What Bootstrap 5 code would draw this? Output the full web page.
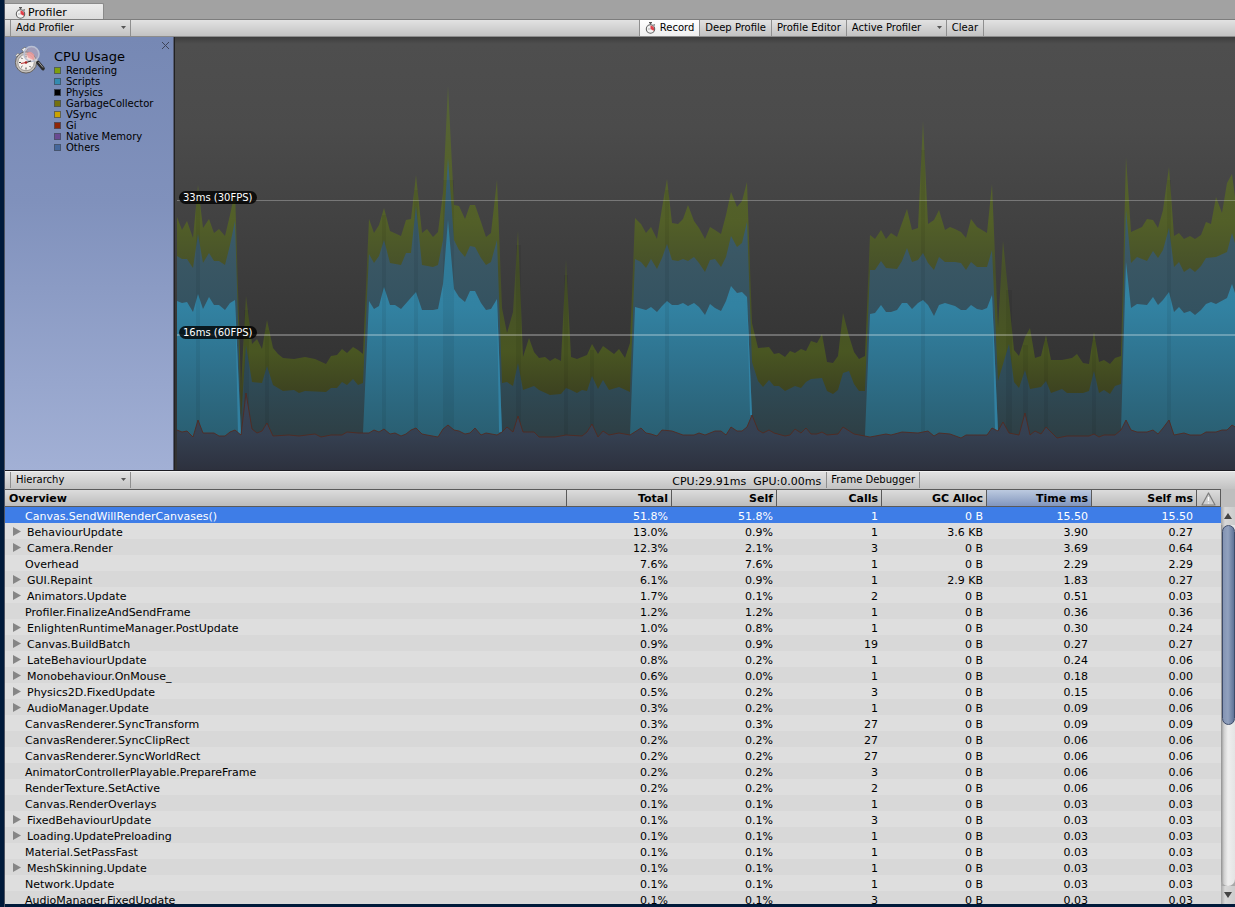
<!DOCTYPE html>
<html lang="en">
<head>
<meta charset="utf-8">
<meta name="viewport" content="width=device-width, initial-scale=1">
<title>Profiler</title>
<link href="https://cdn.jsdelivr.net/npm/bootstrap@5.3.0/dist/css/bootstrap.min.css" rel="stylesheet">
<style>
  body { background: #001a3a; font-family: "DejaVu Sans", sans-serif; font-size: 11px; line-height: 16px; color: #000; }
  .window { margin-left: 4px; border-left: 1px solid #4d5260; padding-bottom: 3px; background-clip: content-box; }
  /* window tab */
  .tabstrip { height: 19px; background: #a2a2a2; padding-top: 3px; flex: none; }
  .tab-btn { width: 99px; height: 16px; padding: 2px 0 0 10px; border: 1px solid #8a8a8a; border-width: 1px 1px 0 0; border-radius: 0 2px 0 0; background: linear-gradient(#ececec, #dcdcdc); font-size: 11px; line-height: 14px; text-align: left; }
  .watch { width: 11px; height: 12px; flex: none; }
  .tab-btn .watch { margin-right: 2px; }
  .tool .watch { margin-right: 4px; }
  /* toolbars */
  .toolbar { height: 18px; flex: none; font-size: 11px; line-height: 15px; border-top: 1px solid #7d7d7d; border-bottom: 1px solid #8c8c8c; background: linear-gradient(#e2e2e2, #c2c2c2); }
  .toolbar.lower { border-top-color: #f0f0f0; border-bottom: 0; }
  .tool { border: 0; border-right: 1px solid #8f8f8f; background: transparent; padding: 0 5px; height: 16px; font-size: 10px; line-height: 16px; color: #000; border-radius: 0; white-space: nowrap; }
  .tool.first { border-left: 1px solid #8f8f8f; }
  .tool.snug { padding: 0 4px; }
  .tool.on { background: linear-gradient(#fff, #efefef); }
  select.tool { appearance: none; padding-left: 5px; background: url("data:image/svg+xml,%3Csvg xmlns='http://www.w3.org/2000/svg' width='5' height='3'%3E%3Cpath d='M0 0h5L2.5 3z' fill='%23555'/%3E%3C/svg%3E") no-repeat right 4px top 6px; }
  .pick-view { width: 121px; margin-left: 5px; }
  .pick-target { width: 100px; }
  .end-space { margin-right: 251px; }
  .end-space-lower { margin-right: 315px; }
  .stats { line-height: 19px; padding-right: 5px; gap: 7px; }
  /* chart area */
  .monitor { height: 434px; flex: none; background: #333; border-bottom: 1px solid #1c1c22; }
  .legend-pane { width: 169px; flex: none; padding: 8px 3px 0 9px; background: linear-gradient(#7688b4, #8091bc 38%, #a2b0d5); border-right: 1px solid #555c74; }
  .legend-title { font-size: 13px; line-height: 16px; margin: 4px 0 0; font-weight: 400; }
  .legend-list { font-size: 10px; line-height: 11px; }
  .legend-list li { gap: 5px; }
  .swatch { width: 7px; height: 7px; border: 1px solid rgba(70,80,100,.8); flex: none; }
  .shut { border: 0; background: none; padding: 0; position: absolute; right: 3px; top: 4px; line-height: 0; }
  .plot { min-width: 0; padding-left: 2px; background: linear-gradient(#3d3d3d, #4e4e4e 7px, #4b4b4b 90px, #333 330px); border-left: 1px solid #222; }
  .plot svg { width: 100%; height: 100%; display: block; }
  .fps { position: absolute; left: 4px; height: 13px; padding: 0 4px; border-radius: 7px; background: rgba(0,0,0,.8); color: #fff; font-size: 10px; line-height: 13px; white-space: nowrap; }
  .fps-30 { top: 154px; }
  .fps-60 { top: 289px; }
  /* call table */
  .grid-area { min-height: 0; background: #bebebe; }
  .calls { table-layout: fixed; width: 100%; border-collapse: separate; border-spacing: 0; }
  .calls th { height: 18px; padding: 1px 3px 0; line-height: 15px; border: 1px solid #5a5a5a; border-left: 0; background: linear-gradient(#dcdcdc, #bcbcbc); text-align: right; font-weight: 700; white-space: nowrap; }
  .calls th:first-child { text-align: left; padding-left: 4px; }
  .calls th.sorted { background: linear-gradient(#bccae0, #8296bd); }
  .calls td { height: 16px; padding: 3px 4px 0 0; line-height: 13px; text-align: right; white-space: nowrap; }
  .calls td:first-child { text-align: left; padding-left: 20px; }
  .calls tr.parent td:first-child { padding-left: 8px; }
  .calls tbody tr { background: #d8d8d8; }
  .calls tbody tr:nth-child(even) { background: #dedede; }
  .calls tbody tr.picked { background: #3e7de7; color: #fff; }
  .twist { width: 8px; height: 9px; margin-right: 6px; display: inline-block; background: #858585; clip-path: polygon(0 0, 100% 50%, 0 100%); }
  .c-num { width: 105px; }
  .c-warn { width: 24px; }
  .bar-col { width: 14px; flex: none; padding-top: 18px; }
  .rail { background: #a8a8a8; min-height: 0; }
  .rail-groove { height: 100%; border-radius: 0 0 7px 7px; background: linear-gradient(90deg, #8f8f8f, #cfcfcf 3px, #eee 7px, #e4e4e4); }
  .step { height: 18px; border: 0; padding: 0; background: linear-gradient(90deg, #a8a8a8, #d8d8d8 4px, #ccc); line-height: 0; flex: none; }
  .thumb { height: 200px; margin-left: 1px; border: 1px solid #3d4b69; border-radius: 7px; background: linear-gradient(90deg, #8494b3, #91a1be 5px, #5f7397); }
</style>
</head>
<body>
<svg width="0" height="0" class="d-none" aria-hidden="true">
  <symbol id="watch" viewBox="0 0 11 12">
    <path d="M4 .6h3M5.500 .5v2M8.700 2.300l1 1" stroke="#555" stroke-width="1.200" fill="none"/>
    <circle cx="5.500" cy="7" r="4.200" fill="#f4f4f4" stroke="#5f5f5f" stroke-width="1.100"/>
    <path d="M5.500 7V3.400A3.600 3.600 0 0 1 8.600 8.800z" fill="#e0404a"/>
    <path d="M5.500 7H3" stroke="#aaa" stroke-width=".8"/>
  </symbol>
</svg>
<div class="window d-flex flex-column vh-100 overflow-hidden">
  <div class="tabstrip">
    <button class="tab-btn d-flex align-items-center"><svg class="watch"><use href="#watch"/></svg>Profiler</button>
  </div>

  <div class="toolbar d-flex">
    <select class="tool first pick-view" aria-label="Add Profiler"><option>Add Profiler</option></select>
    <div class="d-flex ms-auto end-space">
      <button class="tool first on d-flex align-items-center"><svg class="watch"><use href="#watch"/></svg>Record</button>
      <button class="tool">Deep Profile</button>
      <button class="tool">Profile Editor</button>
      <select class="tool pick-target" aria-label="Target"><option>Active Profiler</option></select>
      <button class="tool">Clear</button>
    </div>
  </div>

  <div class="monitor d-flex">
    <div class="legend-pane d-flex position-relative">
      <svg width="32" height="32" viewBox="0 0 32 32" class="flex-shrink-0 me-2">
        <path d="M7.500 4.500l3.500-2.500 2.500 3-3.500 2.500z" fill="#eee" stroke="#6b6b6b" stroke-width=".8"/>
        <path d="M1.500 10.500l2.500-2.500 1.500 1.500-2.500 2.500z" fill="#ddd" stroke="#777" stroke-width=".6"/>
        <circle cx="12" cy="17.500" r="10.600" fill="#c4c0bc" stroke="#66625e"/>
        <circle cx="12" cy="17.500" r="8.200" fill="#f6f2ee" stroke="#8d8985" stroke-width=".8"/>
        <g stroke="#444"><path d="M12 10.500v2M12 22.500v2M5 17.500h2M7.100 12.600l1.400 1.400M7.100 22.400l1.400-1.400M16.900 22.400l-1.400-1.400"/></g>
        <circle cx="17.500" cy="9" r="7.500" fill="#efc4c2" fill-opacity=".35" stroke="#b9c0d3" stroke-width="1.600"/>
        <path d="M12.500 8.500q4-4 7.500 1 1 4-1 5.500l-5-2.500z" fill="#ef9a9a" fill-opacity=".8"/>
        <path d="M12 17.500l-5 1" stroke="#b33" stroke-width="1.200"/><path d="M12 17.500l5-1.500" stroke="#333" stroke-width="1.200"/>
        <circle cx="12" cy="17.500" r="1.300" fill="#a22"/>
        <path d="M21.500 14.500l3 3" stroke="#d4d4d4" stroke-width="2.200"/>
        <path d="M24 17.500l5 6" stroke="#2b2b2b" stroke-width="3.600" stroke-linecap="round"/>
        <path d="M24.500 17l4.500 5.500" stroke="#aaa" stroke-width=".9"/>
      </svg>
      <div>
        <h1 class="legend-title">CPU Usage</h1>
        <ul class="legend-list list-unstyled mb-0" id="legend"></ul>
      </div>
      <button class="shut" aria-label="Close"><svg width="9" height="9" viewBox="0 0 9 9"><path d="M1 1l7 7M8 1l-7 7" stroke="#3c4358" fill="none"/></svg></button>
    </div>
    <div class="plot flex-fill position-relative">
      <svg viewBox="177 37 1058 433" preserveAspectRatio="none" role="img" aria-label="Frame time by category">
        <defs>
          <linearGradient id="gGreen" gradientUnits="userSpaceOnUse" x1="0" y1="86" x2="0" y2="395"><stop offset="0" stop-color="#56643a"/><stop offset=".2" stop-color="#55622f"/><stop offset=".44" stop-color="#525f28"/><stop offset=".6" stop-color="#46502a"/><stop offset=".86" stop-color="#495622"/><stop offset="1" stop-color="#3c4120"/></linearGradient>
          <linearGradient id="gSlate" gradientUnits="userSpaceOnUse" x1="0" y1="160" x2="0" y2="435"><stop offset="0" stop-color="#38647a"/><stop offset=".35" stop-color="#3a5764"/><stop offset=".55" stop-color="#345260"/><stop offset=".8" stop-color="#2f4b57"/><stop offset="1" stop-color="#2e3f45"/></linearGradient>
          <linearGradient id="gBlue" gradientUnits="userSpaceOnUse" x1="0" y1="220" x2="0" y2="435"><stop offset="0" stop-color="#3585a5"/><stop offset=".4" stop-color="#3282a2"/><stop offset=".7" stop-color="#2e708b"/><stop offset="1" stop-color="#2a5f72"/></linearGradient>
          <linearGradient id="gBase" gradientUnits="userSpaceOnUse" x1="0" y1="400" x2="0" y2="470"><stop offset="0" stop-color="#3a4356"/><stop offset=".5" stop-color="#354051"/><stop offset="1" stop-color="#2d313e"/></linearGradient>
        </defs>
        <path fill="url(#gGreen)" d="M177 470L177 217 182 230 187 221 193 238 198 185 203 228 209 219 214 233 219 229 225 236 230 215 235 191 241 387 246 296 252 344 257 339 262 349 267 320 273 348 278 354 283 358 294 359 305 357 315 359 326 364 331 356 337 355 342 349 347 353 353 347 358 350 363 354 369 219 374 233 379 225 384 208 390 231 401 236 406 220 411 219 416 175 422 233 427 229 433 237 438 232 443 193 448 86 454 205 459 206 465 219 470 205 475 205 481 222 486 237 491 233 497 180 502 308 507 333 513 312 518 231 523 357 529 338 534 352 539 358 545 357 550 361 555 358 561 361 566 260 571 357 577 359 587 355 592 344 598 354 603 346 614 354 619 349 625 358 630 343 635 218 641 224 646 233 651 227 657 239 662 208 667 179 672 223 678 224 683 219 688 205 694 221 699 228 705 239 710 227 715 230 721 234 726 215 731 192 737 207 742 201 747 182 752 323 758 348 769 347 774 354 779 353 785 357 790 351 795 353 801 349 806 351 811 341 817 343 822 334 827 362 833 363 838 356 843 313 849 336 854 352 859 359 865 356 870 235 875 239 881 230 886 239 891 233 897 237 907 209 912 230 918 228 923 121 928 224 934 220 939 210 945 230 950 227 955 229 961 232 966 238 971 219 977 227 987 233 992 184 998 328 1003 241 1009 300 1014 350 1019 356 1025 337 1030 328 1035 358 1041 356 1046 335 1051 360 1062 360 1072 358 1077 354 1083 363 1089 364 1094 332 1099 362 1104 360 1110 364 1115 358 1121 356 1126 157 1131 232 1142 227 1147 219 1153 220 1158 228 1163 210 1169 167 1174 236 1179 233 1184 239 1190 236 1195 239 1201 235 1206 222 1211 224 1216 197 1222 213 1227 183 1232 174 1235 197V470z"/>
        <path fill="url(#gSlate)" d="M177 470L177 256 182 259 187 259 193 268 198 234 203 263 209 253 214 261 219 261 225 265 230 245 235 221 241 420 246 345 252 382 262 383 267 366 273 385 283 391 294 390 299 393 305 391 326 392 331 388 337 388 342 382 347 385 353 379 358 385 363 383 369 254 374 263 379 256 384 240 390 263 401 265 406 253 411 253 416 206 422 265 433 267 438 265 443 240 448 158 454 240 459 250 465 257 470 246 475 247 481 258 486 265 491 262 497 240 502 383 507 382 513 386 518 363 523 390 534 386 539 390 550 395 561 394 566 388 571 390 577 393 582 390 587 391 592 376 598 389 603 380 609 390 619 387 630 392 635 259 641 262 646 268 651 259 657 269 662 258 667 244 672 260 678 261 683 259 688 261 694 257 699 263 705 272 710 260 715 259 721 267 726 257 731 236 737 247 742 243 747 222 752 362 758 381 763 387 769 380 774 386 779 386 785 391 795 386 801 388 806 382 811 379 822 378 827 391 833 394 838 390 843 373 849 371 854 384 859 391 865 391 870 270 875 270 881 261 886 268 897 269 902 261 907 248 912 262 918 260 923 253 928 263 934 270 939 257 945 262 955 262 961 263 966 270 971 262 977 267 987 267 992 250 998 381 1009 344 1014 382 1019 388 1025 370 1030 389 1041 387 1046 381 1051 393 1062 389 1067 393 1083 393 1089 391 1094 371 1099 393 1104 390 1110 394 1115 386 1121 384 1126 210 1131 263 1137 257 1147 261 1153 251 1158 258 1163 250 1169 228 1174 267 1179 262 1184 272 1190 268 1195 272 1201 266 1206 258 1216 257 1227 252 1232 233 1235 243V470z"/>
        <path fill="url(#gBlue)" d="M177 470L177 301 182 303 187 302 193 312 198 294 203 309 209 297 214 305 219 305 225 310 230 303 235 300 241 435V470z
          M363 470V433L369 301 374 309 379 306 384 287 390 305 395 305 401 309 416 292 422 310 433 310 438 309 443 284 448 220 454 289 459 297 465 302 470 291 475 291 481 303 486 310 491 309 497 299 502 432V470z
          M630 470V435L635 307 646 310 651 307 657 312 662 306 667 301 672 305 678 305 683 303 688 306 694 303 699 307 705 315 710 304 715 308 721 311 726 301 731 286 737 293 742 292 747 297 752 415V470z
          M865 470V435L870 314 875 313 881 305 886 312 891 312 897 310 902 303 907 303 912 309 918 303 923 300 928 305 934 316 939 305 945 303 955 306 961 310 966 310 971 305 977 309 982 310 987 308 992 295 998 431V470z
          M1121 470V430L1126 262 1131 308 1137 304 1147 305 1153 297 1158 305 1163 300 1169 292 1174 312 1179 307 1184 313 1190 311 1195 315 1201 310 1206 304 1211 302 1216 304 1227 298 1232 284 1235 293V470z"/>
        <!-- brighter edge where script time falls off -->
        <path fill="#348bb0" fill-opacity=".7" d="M235 300L241 435H238zM497 299L502 432H499zM747 297L752 415H750zM992 295L998 431H995z"/>
        <!-- faint vertical shading under the peaks -->
        <path fill="#000" fill-opacity=".06" d="M196 200h4V470h-4zM244 310h5V470h-5zM265 330h4V470h-4zM382 215h4V470h-4zM414 190h4V470h-4zM443 180h11V470h-11zM516 245h5V470h-5zM564 275h4V470h-4zM590 350h4V470h-4zM665 190h4V470h-4zM921 150h4V470h-4zM1006 290h6V470h-6zM1023 345h5V470h-5zM1044 340h4V470h-4zM1092 340h4V470h-4zM1167 180h4V470h-4z"/>
        <path fill="url(#gBase)" stroke="#54291f" stroke-opacity=".85" d="M170 480V430L177 430 182 432 187 431 193 437 198 420 203 433 214 433 219 436 225 436 230 432 235 430 241 435 246 393 252 429 257 433 262 431 267 423 273 436 289 435 299 436 315 434 321 437 331 435 342 435 347 432 358 433 369 433 374 430 379 432 384 429 390 434 395 433 401 436 406 434 411 430 416 428 422 434 427 435 438 437 443 429 448 425 454 430 459 431 465 434 470 433 475 428 481 435 486 433 497 435 502 432 507 427 513 432 518 416 523 432 534 432 539 437 555 437 566 435 582 436 587 432 592 424 598 437 603 431 609 435 619 433 630 435 641 428 646 433 651 434 657 436 662 430 672 431 683 435 694 435 699 433 705 435 715 431 721 431 726 435 731 427 737 431 742 431 747 427 752 415 758 430 763 433 769 430 774 433 785 436 790 435 795 429 801 433 806 428 811 434 817 434 822 432 827 435 838 434 843 427 854 434 870 437 886 434 891 435 902 432 918 433 928 431 934 436 939 433 950 434 961 438 966 435 987 435 992 428 998 431 1003 422 1009 433 1019 435 1025 413 1030 435 1035 431 1041 434 1046 427 1057 438 1067 436 1089 436 1094 434 1099 437 1104 435 1115 435 1121 430 1126 420 1131 430 1137 432 1147 432 1153 430 1158 434 1163 428 1169 420 1174 435 1184 433 1190 435 1201 435 1206 432 1216 432 1222 430 1227 430 1232 425 1240 430V480z"/>
        <path fill="#fff" fill-opacity=".28" d="M177 200H1235V201H177zM177 334H1235V336H177z"/>
      </svg>
      <span class="fps fps-30">33ms (30FPS)</span>
      <span class="fps fps-60">16ms (60FPS)</span>
    </div>
  </div>

  <div class="toolbar lower d-flex">
    <select class="tool first pick-view" aria-label="View"><option>Hierarchy</option></select>
    <div class="d-flex ms-auto end-space-lower">
      <div class="stats d-flex"><span>CPU:29.91ms</span><span>GPU:0.00ms</span></div>
      <button class="tool first snug">Frame Debugger</button>
    </div>
  </div>

  <div class="grid-area flex-fill d-flex overflow-hidden">
    <div class="flex-fill overflow-hidden">
      <table class="calls">
        <colgroup><col><col class="c-num"><col class="c-num"><col class="c-num"><col class="c-num"><col class="c-num"><col class="c-num"><col class="c-warn"></colgroup>
        <thead><tr><th>Overview</th><th>Total</th><th>Self</th><th>Calls</th><th>GC Alloc</th><th class="sorted">Time ms</th><th>Self ms</th>
          <th aria-label="Warnings"><svg width="15" height="14" viewBox="0 0 15 14" class="d-block mx-auto"><path d="M7.500 1L14 13H1z" fill="#cfcfcf" stroke="#7c7c7c" stroke-width="1.200" stroke-linejoin="round"/><path d="M7.500 5v4M7.500 10.500v1" stroke="#fff" stroke-width="1.300"/></svg></th></tr></thead>
        <tbody id="rows"></tbody>
      </table>
    </div>
    <div class="bar-col d-flex flex-column">
      <button class="step" aria-label="Scroll up"><svg width="8" height="6" viewBox="0 0 8 6"><path d="M4 0l4 6H0z" fill="#444"/></svg></button>
      <div class="rail flex-fill"><div class="rail-groove"><div class="thumb"></div></div></div>
      <button class="step" aria-label="Scroll down"><svg width="8" height="6" viewBox="0 0 8 6"><path d="M4 6l4-6H0z" fill="#444"/></svg></button>
    </div>
  </div>
</div>

<script src="https://cdn.jsdelivr.net/npm/bootstrap@5.3.0/dist/js/bootstrap.bundle.min.js"></script>
<script>
  const series = [["Rendering", "#7f9f0c"], ["Scripts", "#338bb0"], ["Physics", "#000"], ["GarbageCollector", "#74700f"], ["VSync", "#cba300"], ["Gi", "#8f2508"], ["Native Memory", "#6a4a92"], ["Others", "#46689c"]];
  document.getElementById("legend").innerHTML = series.map(([name, color]) =>
    `<li class="d-flex align-items-center"><span class="swatch" style="background:${color}"></span><span>${name}</span></li>`).join("");

  // expandable | name | total | self | calls | GC alloc | time ms | self ms
  const calls = `0|Canvas.SendWillRenderCanvases()|51.8%|51.8%|1|0 B|15.50|15.50
1|BehaviourUpdate|13.0%|0.9%|1|3.6 KB|3.90|0.27
1|Camera.Render|12.3%|2.1%|3|0 B|3.69|0.64
0|Overhead|7.6%|7.6%|1|0 B|2.29|2.29
1|GUI.Repaint|6.1%|0.9%|1|2.9 KB|1.83|0.27
1|Animators.Update|1.7%|0.1%|2|0 B|0.51|0.03
0|Profiler.FinalizeAndSendFrame|1.2%|1.2%|1|0 B|0.36|0.36
1|EnlightenRuntimeManager.PostUpdate|1.0%|0.8%|1|0 B|0.30|0.24
1|Canvas.BuildBatch|0.9%|0.9%|19|0 B|0.27|0.27
1|LateBehaviourUpdate|0.8%|0.2%|1|0 B|0.24|0.06
1|Monobehaviour.OnMouse_|0.6%|0.0%|1|0 B|0.18|0.00
1|Physics2D.FixedUpdate|0.5%|0.2%|3|0 B|0.15|0.06
1|AudioManager.Update|0.3%|0.2%|1|0 B|0.09|0.06
0|CanvasRenderer.SyncTransform|0.3%|0.3%|27|0 B|0.09|0.09
0|CanvasRenderer.SyncClipRect|0.2%|0.2%|27|0 B|0.06|0.06
0|CanvasRenderer.SyncWorldRect|0.2%|0.2%|27|0 B|0.06|0.06
0|AnimatorControllerPlayable.PrepareFrame|0.2%|0.2%|3|0 B|0.06|0.06
0|RenderTexture.SetActive|0.2%|0.2%|2|0 B|0.06|0.06
0|Canvas.RenderOverlays|0.1%|0.1%|1|0 B|0.03|0.03
1|FixedBehaviourUpdate|0.1%|0.1%|3|0 B|0.03|0.03
1|Loading.UpdatePreloading|0.1%|0.1%|1|0 B|0.03|0.03
0|Material.SetPassFast|0.1%|0.1%|1|0 B|0.03|0.03
1|MeshSkinning.Update|0.1%|0.1%|1|0 B|0.03|0.03
0|Network.Update|0.1%|0.1%|1|0 B|0.03|0.03
0|AudioManager.FixedUpdate|0.1%|0.1%|3|0 B|0.03|0.03`;
  document.getElementById("rows").innerHTML = calls.split("\n").map((line, i) => {
    const [open, name, ...nums] = line.split("|");
    const cls = [open === "1" ? "parent" : "", i === 0 ? "picked" : ""].join(" ").trim();
    return `<tr class="${cls}"><td>${open === "1" ? '<span class="twist"></span>' : ""}${name}</td>${nums.map(n => `<td>${n}</td>`).join("")}<td></td></tr>`;
  }).join("");
</script>
</body>
</html>
